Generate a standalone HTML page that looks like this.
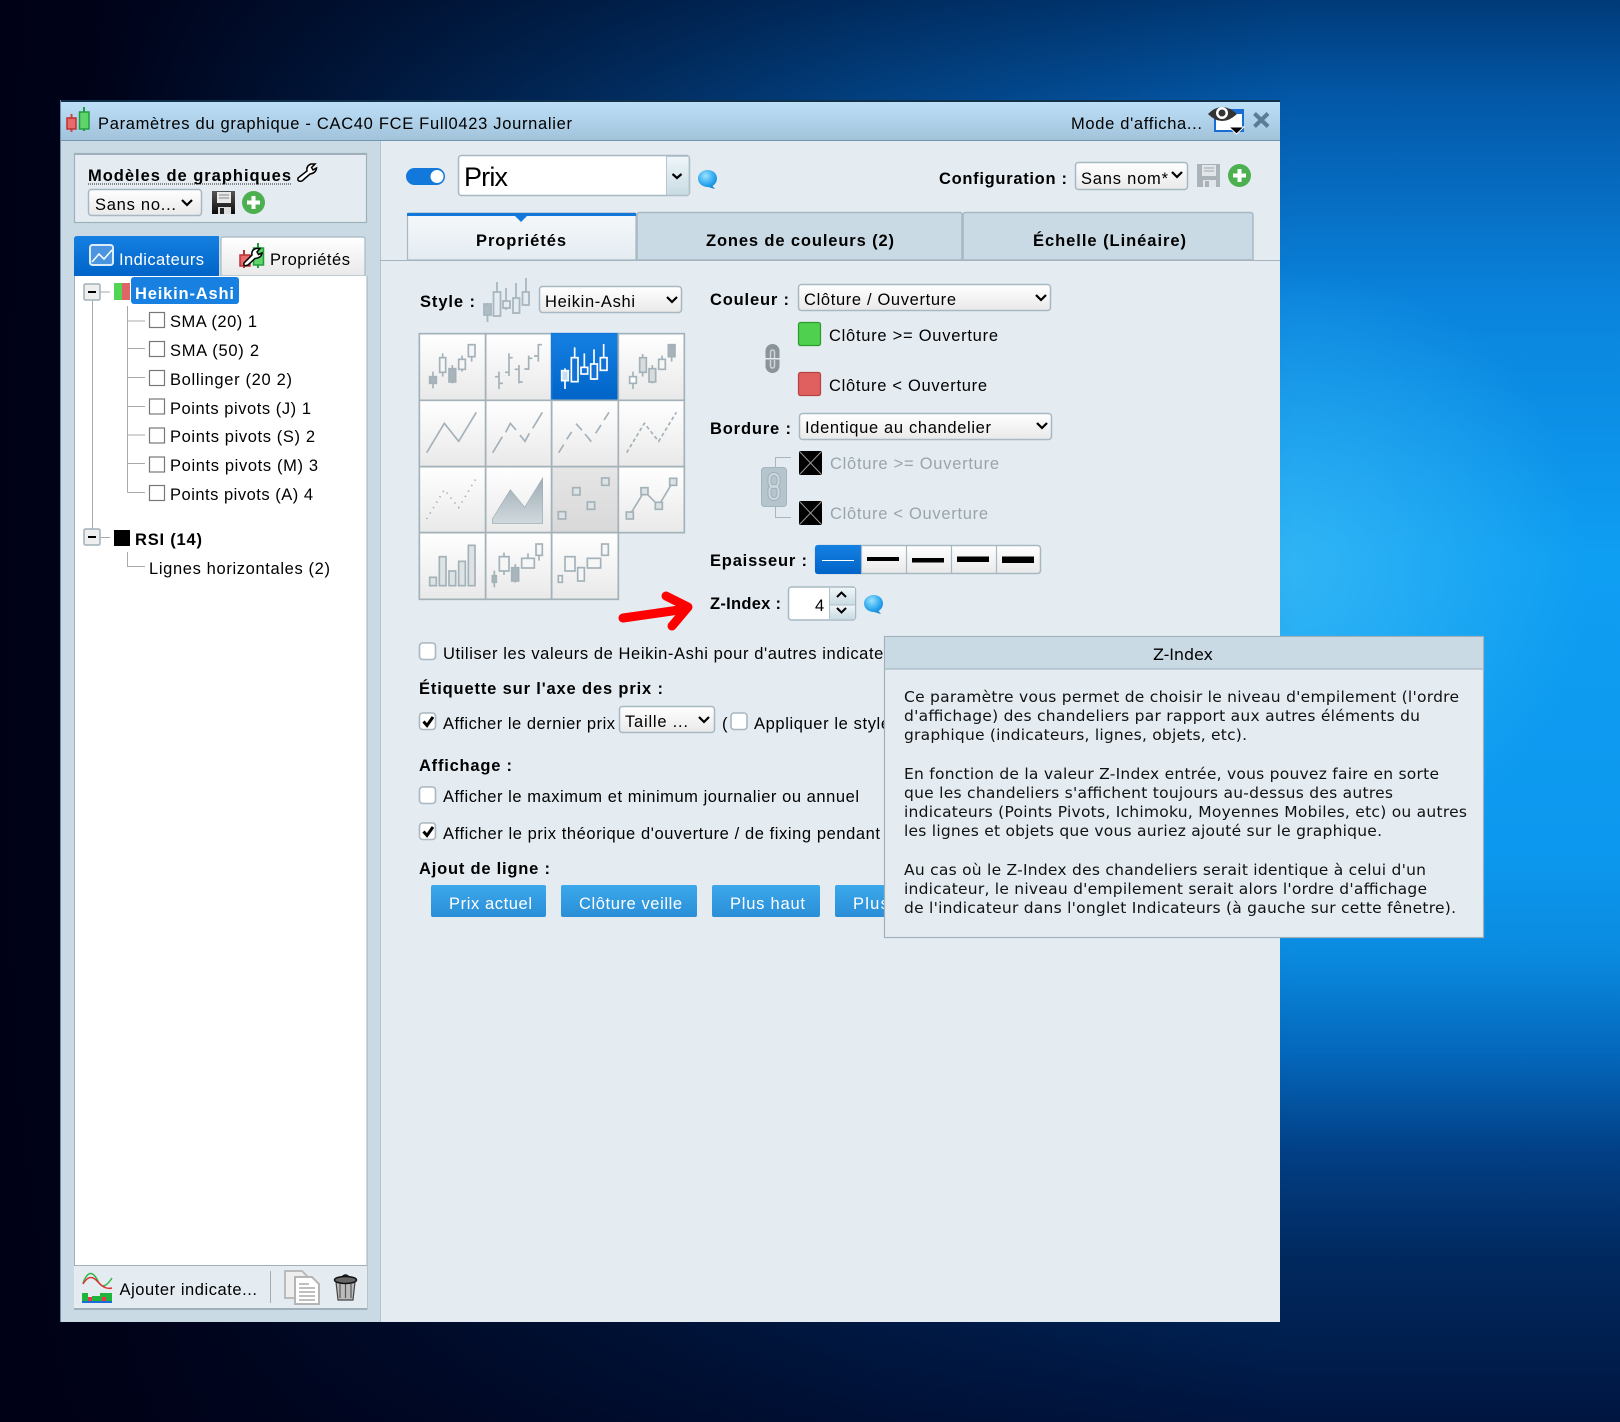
<!DOCTYPE html>
<html lang="fr"><head><meta charset="utf-8"><title>Paramètres du graphique</title>
<style>
html,body{margin:0;padding:0;width:1620px;height:1422px;overflow:hidden;background:#000118}
svg{display:block}
text{font-family:"Liberation Sans",sans-serif;font-size:16.5px;fill:#000}
.b{font-weight:bold}
.w{fill:#fff}
.d{fill:#9aa5ab}
.tt{font-family:"DejaVu Sans",sans-serif;font-size:15.5px;fill:#111}
.g path,.g rect,.g polyline,.g line{stroke:#a3b1b9;stroke-width:5;fill:none}
</style></head><body>
<svg xmlns="http://www.w3.org/2000/svg" width="1620" height="1422" viewBox="0 0 1620 1422">
<defs>
<linearGradient id="bv" x1="0" y1="0" x2="0" y2="1">
<stop offset="0" stop-color="#003a78"/><stop offset=".07" stop-color="#0358a8"/><stop offset=".21" stop-color="#0a83dc"/><stop offset=".39" stop-color="#0e9ef2"/><stop offset=".6" stop-color="#0c98ee"/><stop offset=".67" stop-color="#0a8be0"/><stop offset=".74" stop-color="#0468bc"/><stop offset=".81" stop-color="#023f86"/><stop offset=".88" stop-color="#012a60"/><stop offset="1" stop-color="#001540"/>
</linearGradient>
<linearGradient id="bh" x1="0" y1="0" x2="1" y2="0">
<stop offset="0" stop-color="#000116" stop-opacity="1"/><stop offset=".06" stop-color="#000116" stop-opacity=".98"/><stop offset=".235" stop-color="#000116" stop-opacity=".72"/><stop offset=".54" stop-color="#000116" stop-opacity=".27"/><stop offset=".8" stop-color="#000116" stop-opacity="0"/>
</linearGradient>
<radialGradient id="gl" gradientUnits="userSpaceOnUse" cx="1290" cy="570" r="300"><stop offset="0" stop-color="#3cbcf6" stop-opacity=".75"/><stop offset="1" stop-color="#3cbcf6" stop-opacity="0"/></radialGradient>
<linearGradient id="ti" x1="0" y1="0" x2="0" y2="1"><stop offset="0" stop-color="#bee1fa"/><stop offset="1" stop-color="#a2c3da"/></linearGradient>
<linearGradient id="bl" x1="0" y1="0" x2="0" y2="1"><stop offset="0" stop-color="#1580e2"/><stop offset="1" stop-color="#0064c8"/></linearGradient>
<linearGradient id="se" x1="0" y1="0" x2="0" y2="1"><stop offset="0" stop-color="#fff"/><stop offset="1" stop-color="#e9e9e9"/></linearGradient>
<linearGradient id="pr" x1="0" y1="0" x2="0" y2="1"><stop offset="0" stop-color="#e6e6e6"/><stop offset="1" stop-color="#d8d8d8"/></linearGradient>
<linearGradient id="lb" x1="0" y1="0" x2="0" y2="1"><stop offset="0" stop-color="#3ca8ec"/><stop offset="1" stop-color="#2a8ed6"/></linearGradient>
<linearGradient id="ta" x1="0" y1="0" x2="0" y2="1"><stop offset="0" stop-color="#f5f8fa"/><stop offset="1" stop-color="#e4ecf2"/></linearGradient>
<linearGradient id="sp" x1="0" y1="0" x2="0" y2="1"><stop offset="0" stop-color="#eff6f9"/><stop offset="1" stop-color="#c9dce3"/></linearGradient>
<linearGradient id="ar" x1="0" y1="0" x2="0" y2="1"><stop offset="0" stop-color="#9eadb5"/><stop offset="1" stop-color="#d0d9dd"/></linearGradient>
<radialGradient id="bu" cx=".4" cy=".3" r=".8"><stop offset="0" stop-color="#9ae2ff"/><stop offset=".6" stop-color="#2aa6ee"/><stop offset="1" stop-color="#1279cc"/></radialGradient>
<linearGradient id="fl" x1="0" y1="0" x2="0" y2="1"><stop offset="0" stop-color="#555"/><stop offset="1" stop-color="#0c0c0c"/></linearGradient>
</defs>

<!-- desktop background -->
<rect width="1620" height="1422" fill="url(#bv)"/>
<rect width="1620" height="1422" fill="url(#gl)"/>
<rect width="1620" height="1422" fill="url(#bh)"/>

<!-- window -->
<rect x="60" y="100" width="1220" height="1222" fill="#e4ecf2"/>
<rect x="60" y="100" width="320" height="1222" fill="#c9dae4"/>
<rect x="60" y="100" width="1220" height="40" fill="url(#ti)"/>
<rect x="60" y="100" width="1220" height="2" fill="#12304a"/>
<rect x="60" y="100" width="1" height="1222" fill="#6f8ea5"/>
<rect x="60" y="140" width="1220" height="1" fill="#7097b0"/>
<rect x="380" y="141" width="1" height="1181" fill="#b3c3cd"/>

<!-- title bar -->
<path d="M71.500 114V132" stroke="#c44" stroke-width="2" fill="none"/>
<path d="M84 107V131" stroke="#1f9e3f" stroke-width="2"/>
<rect x="67" y="118" width="9" height="11" fill="#e96a6a" stroke="#b33" stroke-width="1.500"/>
<rect x="79.500" y="112" width="9.500" height="17" fill="#5fd46a" stroke="#1f9e3f" stroke-width="1.500"/>
<text x="98" y="129" textLength="474">Paramètres du graphique - CAC40 FCE Full0423 Journalier</text>
<text x="1071" y="129" textLength="131">Mode d'afficha...</text>
<rect x="1215" y="110" width="28" height="21" fill="#fff" stroke="#1a6dd4" stroke-width="2"/>
<rect x="1215" y="110" width="28" height="4" fill="#1a6dd4"/>
<path d="M1208 114Q1222 100 1237 114Q1222 128 1208 114Z" fill="#333"/>
<circle cx="1222" cy="113" r="6" fill="#fff"/><circle cx="1222" cy="113" r="3.500" fill="#333"/>
<path d="M1229 127H1244L1236.500 134Z" fill="#000" stroke="#fff"/>
<path d="M1254.500 113.500L1268 126.500M1268 113.500L1254.500 126.500" stroke="#5a7d94" stroke-width="4" fill="none"/>

<!-- modèles -->
<rect x="74.500" y="153.500" width="292" height="69" fill="#e4ecf2" stroke="#9fb0bb" stroke-width="1.200"/>
<rect x="74" y="153" width="293" height="2" fill="#9fb0bb"/>
<text class="b" x="88" y="181" textLength="203">Modèles de graphiques</text>
<line x1="88" y1="184" x2="291" y2="184" stroke="#222" stroke-width="1" stroke-dasharray="1 1"/>
<path d="M298 178L307 171Q306 166 311 164L315 164L311.500 167.500L313 170L316.500 168Q316 173 310 174L302 181Q297 182 298 178Z" fill="#fff" stroke="#000" stroke-width="1.500"/>
<rect x="88.500" y="189.500" width="113" height="26" rx="3" fill="url(#se)" stroke="#a8b8c2" stroke-width="1.500"/>
<text x="95" y="210" textLength="81">Sans no...</text>
<path d="M182 200l5 5 5-5" stroke="#000" stroke-width="2.200" fill="none"/>
<path d="M212 191H235V214H212Z" fill="url(#fl)"/><rect x="217" y="192" width="14" height="11" fill="#e8e8e8"/><path d="M219 195h10M219 198h10" stroke="#888" stroke-width="1"/><rect x="218" y="207" width="13" height="7" fill="#ddd"/><rect x="220" y="208" width="4" height="6" fill="#222"/>
<circle cx="253.500" cy="202.500" r="11.500" fill="#4caf50"/><path d="M253.500 196v13M247 202.500h13" stroke="#fff" stroke-width="4"/>

<!-- left tabs -->
<path d="M74 276V239Q74 236 77 236H219V276Z" fill="url(#bl)"/>
<path d="M221 276V239Q221 237 224 237H362Q365 237 365 239V276Z" fill="url(#se)" stroke="#a8b8c2" stroke-width="1.200"/>
<rect x="90" y="245" width="23" height="20" rx="2.500" fill="#4a94e0" stroke="#dcecfb" stroke-width="2"/>
<path d="M92 262L99 254L104 259L112 250" stroke="#fff" stroke-width="1.500" fill="none"/>
<text class="w" x="119" y="265" textLength="85">Indicateurs</text>
<path d="M244 250V268" stroke="#b33" stroke-width="2"/><rect x="240" y="255" width="10" height="11" fill="#e96a6a" stroke="#b33" stroke-width="1.500"/>
<path d="M258 243V268" stroke="#1f9e3f" stroke-width="2"/><rect x="253.500" y="248" width="10" height="17" fill="#5fd46a" stroke="#1f9e3f" stroke-width="1.500"/>
<path d="M244 263L252 255Q251 250 256 248.500L260 248.500L257 252L258.500 254.500L262 253Q261.500 258 255 258.500L248 265Q243 267 244 263Z" fill="#fff" stroke="#000" stroke-width="1.500"/>
<text x="270" y="265" textLength="80">Propriétés</text>

<!-- tree -->
<rect x="74" y="276" width="293" height="989" fill="#fff"/>
<rect x="74" y="276" width="1" height="1034" fill="#9fb0bb"/>
<rect x="366.500" y="276" width="1" height="1034" fill="#9fb0bb"/>
<path d="M92.500 300V530M100 292H110M127.500 306V492.500M127.500 321H145M127.500 348.500H145M127.500 377.500H145M127.500 406.500H145M127.500 435H145M127.500 463.500H145M127.500 492.500H145M100 537.500H110M127.500 552V566.500H145" stroke="#aaa" stroke-width="1" fill="none"/>
<rect x="84" y="284" width="16" height="16" rx="1.500" fill="#eee" stroke="#9fb0bb" stroke-width="1.500"/><rect x="88" y="291" width="8" height="2" fill="#000"/>
<rect x="114" y="283" width="8" height="17" fill="#52d552"/><rect x="122" y="283" width="8" height="17" fill="#e06666"/>
<rect x="131" y="277" width="108" height="27" rx="3" fill="#1880e0"/>
<text class="b w" x="135" y="299" textLength="99">Heikin-Ashi</text>
<g fill="#fff" stroke="#777" stroke-width="1.200">
<rect x="149.500" y="312.500" width="15" height="15"/><rect x="149.500" y="341.500" width="15" height="15"/><rect x="149.500" y="370.500" width="15" height="15"/><rect x="149.500" y="399" width="15" height="15"/><rect x="149.500" y="428" width="15" height="15"/><rect x="149.500" y="457" width="15" height="15"/><rect x="149.500" y="485.500" width="15" height="15"/>
</g>
<text x="170" y="327" textLength="87">SMA (20) 1</text>
<text x="170" y="356" textLength="89">SMA (50) 2</text>
<text x="170" y="385" textLength="122">Bollinger (20 2)</text>
<text x="170" y="414" textLength="141">Points pivots (J) 1</text>
<text x="170" y="442" textLength="145">Points pivots (S) 2</text>
<text x="170" y="471" textLength="148">Points pivots (M) 3</text>
<text x="170" y="500" textLength="143">Points pivots (A) 4</text>
<rect x="84" y="529" width="16" height="16" rx="1.500" fill="#eee" stroke="#9fb0bb" stroke-width="1.500"/><rect x="88" y="536" width="8" height="2" fill="#000"/>
<rect x="114" y="530" width="16" height="16" fill="#000"/>
<text class="b" x="135" y="545" textLength="67">RSI (14)</text>
<text x="149" y="574" textLength="181">Lignes horizontales (2)</text>

<!-- tree footer -->
<rect x="74" y="1265" width="293" height="44" fill="#e4ecf2"/>
<rect x="74" y="1265" width="293" height="1" fill="#9fb0bb"/>
<rect x="74" y="1308" width="293" height="2" fill="#9fb0bb"/>
<path d="M82 1301V1293H88V1297H92V1296H100V1293H112V1301Z" fill="#1fb53a"/>
<rect x="88" y="1297" width="4" height="4" fill="#e35"/><rect x="102" y="1297" width="4" height="4" fill="#e35"/><rect x="82" y="1301" width="30" height="2" fill="#1a6dd4"/>
<path d="M83 1283Q90 1265 98 1281Q103 1292 112 1278" stroke="#2eb84a" stroke-width="1.500" fill="none"/>
<path d="M83 1284Q90 1272 98 1282Q105 1290 112 1288" stroke="#d33" stroke-width="1.500" fill="none"/>
<rect x="270" y="1271" width="1" height="32" fill="#9fb0bb"/>
<text x="119.500" y="1295" textLength="137.500">Ajouter indicate...</text>
<path d="M285 1271H302L308 1277V1298H285Z" fill="#eee" stroke="#bbb" stroke-width="2"/>
<path d="M295 1277H312L319 1284V1304H295Z" fill="#fff" stroke="#b5b5b5" stroke-width="2"/>
<path d="M299 1284H309M299 1288H315M299 1292H315M299 1296H315M299 1300H315" stroke="#aaa" stroke-width="1.500"/>
<g transform="translate(-1 0)">
<path d="M337 1282H356L354 1300H339Z" fill="#bbb" stroke="#444" stroke-width="1.200"/>
<path d="M341 1284V1298M346.500 1284V1298M352 1284V1298" stroke="#555" stroke-width="1.200"/>
<ellipse cx="346.500" cy="1280" rx="11" ry="3.500" fill="#666" stroke="#111" stroke-width="1.500"/>
<path d="M343 1277Q346.500 1273 350 1277" stroke="#111" stroke-width="1.500" fill="none"/>
</g>

<!-- top row main -->
<rect x="406" y="168" width="39" height="17" rx="8.500" fill="#1278dc"/><circle cx="437" cy="176.500" r="6.500" fill="#fff"/>
<rect x="458.500" y="155.500" width="231" height="40" rx="3" fill="#fff" stroke="#a8b8c2" stroke-width="1.500"/>
<path d="M666.500 156.500H688Q689 156.500 689 158V193Q689 195 688 195H666.500Z" fill="url(#sp)" stroke="#b8c8d0"/>
<path d="M672.500 174l4.500 4 4.500-4" stroke="#000" stroke-width="2.200" fill="none"/>
<text x="464" y="186" textLength="44" style="font-size:27px">Prix</text>
<path d="M698 178.500C698 173 703 170 707.500 170C713 170 717 173.500 717 178.500C717 182 714.500 185 712.500 186L715 189L708 187C702 187 698 183 698 178.500Z" fill="url(#bu)"/>
<text class="b" x="939" y="184" textLength="128">Configuration :</text>
<rect x="1075.500" y="162.500" width="112" height="27" rx="3" fill="url(#se)" stroke="#a8b8c2" stroke-width="1.500"/>
<text x="1081" y="184" textLength="87">Sans nom*</text>
<path d="M1172 172l5 5 5-5" stroke="#000" stroke-width="2.200" fill="none"/>
<path d="M1197 164H1220V187H1197Z" fill="#a9b3b8"/><rect x="1202" y="165" width="14" height="11" fill="#e0e6e9"/><path d="M1204 168h10M1204 171h10" stroke="#a0a8ac" stroke-width="1"/><rect x="1203" y="180" width="13" height="7" fill="#e0e6e9"/><rect x="1205" y="181" width="4" height="6" fill="#a9b3b8"/>
<circle cx="1239.500" cy="175.500" r="11.500" fill="#4caf50"/><path d="M1239.500 169v13M1233 175.500h13" stroke="#fff" stroke-width="4"/>

<!-- main tabs -->
<path d="M637 260V215Q637 212.500 640 212.500H960Q962 212.500 962 215V260Z" fill="#c9dae4" stroke="#a8b8c2" stroke-width="1.500"/>
<path d="M963 260V215Q963 212.500 966 212.500H1250Q1253 212.500 1253 215V260Z" fill="#c9dae4" stroke="#a8b8c2" stroke-width="1.500"/>
<path d="M407.500 260V215Q407.500 213 410 213H634Q636 213 636 215V260Z" fill="url(#ta)" stroke="#a8b8c2" stroke-width="1.200"/>
<rect x="407" y="213" width="229" height="3" fill="#1278dc"/>
<path d="M512 213H530L521 222Z" fill="#1278dc"/>
<rect x="380" y="260" width="900" height="1" fill="#a4b3bd"/>
<text class="b" x="476" y="246" textLength="90">Propriétés</text>
<text class="b" x="706" y="246" textLength="188">Zones de couleurs (2)</text>
<text class="b" x="1033" y="246" textLength="153">Échelle (Linéaire)</text>

<!-- style -->
<text class="b" x="420" y="307" textLength="55">Style :</text>
<g stroke="#a8b6bf" stroke-width="1.800" fill="none">
<path d="M487.500 303V322M497 282V316M506 288V310M516 283V314M526 278V305"/>
<rect x="484" y="304" width="7" height="11" fill="#b0bcc3"/>
<rect x="493.500" y="292" width="7" height="24" fill="#e4ecf2"/>
<rect x="503" y="301" width="7" height="7" fill="#e4ecf2"/>
<rect x="513" y="298" width="6.500" height="15" fill="#e4ecf2"/>
<rect x="522.500" y="292" width="6.500" height="13" fill="#e4ecf2"/>
</g>
<rect x="539.500" y="286.500" width="142" height="26" rx="3" fill="url(#se)" stroke="#a8b8c2" stroke-width="1.500"/>
<text x="545" y="307" textLength="90">Heikin-Ashi</text>
<path d="M667 297l5 5 5-5" stroke="#000" stroke-width="2.200" fill="none"/>

<!-- style grid -->
<g class="g" transform="translate(410 320) scale(.33333)">
<rect x="28" y="41" width="199" height="200" style="fill:url(#se)"/><rect x="227" y="41" width="198" height="200" style="fill:url(#se)"/><rect x="425" y="41" width="200" height="200" style="fill:url(#bl);stroke:#1278dc"/><rect x="625" y="41" width="198" height="200" style="fill:url(#se)"/>
<rect x="28" y="241" width="199" height="199" style="fill:url(#se)"/><rect x="227" y="241" width="198" height="199" style="fill:url(#se)"/><rect x="425" y="241" width="200" height="199" style="fill:url(#se)"/><rect x="625" y="241" width="198" height="199" style="fill:url(#se)"/>
<rect x="28" y="440" width="199" height="198" style="fill:url(#se)"/><rect x="227" y="440" width="198" height="198" style="fill:url(#se)"/><rect x="425" y="440" width="200" height="198" style="fill:url(#pr)"/><rect x="625" y="440" width="198" height="198" style="fill:url(#se)"/>
<rect x="28" y="638" width="199" height="200" style="fill:url(#se)"/><rect x="227" y="638" width="198" height="200" style="fill:url(#se)"/><rect x="425" y="638" width="200" height="200" style="fill:url(#se)"/>
<!-- r0c0 -->
<path d="M69 155V205M98 100V170M127 135V190M156 107V155M185 72V125"/>
<rect x="59" y="170" width="20" height="20" style="fill:#aab5bb"/><rect x="89" y="113" width="18" height="44" style="fill:#f6f6f6"/><rect x="117" y="146" width="20" height="40" style="fill:#aab5bb"/><rect x="146" y="118" width="20" height="30" style="fill:#f6f6f6"/><rect x="175" y="74" width="20" height="36" style="fill:#f6f6f6"/>
<!-- r0c1 -->
<path d="M267 155V207M255 170H267M267 190H279M297 100V168M285 157H297M297 113H308M327 135V190M314 148H327M327 186H338M356 107V150M343 147H356M356 115H367M385 72V125M372 108H385M385 74H396"/>
<!-- r0c2 -->
<path d="M465 145V207M494 82V187M523 100V162M552 88V180M581 72V152" style="stroke:#fff"/>
<rect x="455" y="152" width="20" height="30" style="fill:#c5def5;stroke:#fff"/><rect x="484" y="113" width="20" height="72" style="fill:#1272d6;stroke:#fff"/><rect x="513" y="142" width="20" height="20" style="fill:#1272d6;stroke:#fff"/><rect x="542" y="132" width="20" height="45" style="fill:#1272d6;stroke:#fff"/><rect x="571" y="113" width="20" height="38" style="fill:#1272d6;stroke:#fff"/>
<!-- r0c3 -->
<path d="M669 155V207M698 102V170M727 135V190M756 107V150M785 72V125"/>
<rect x="659" y="170" width="20" height="20" style="fill:#fff"/><rect x="689" y="113" width="20" height="44" style="fill:#d8dcdd"/><rect x="717" y="146" width="20" height="40" style="fill:#d8dcdd"/><rect x="746" y="118" width="20" height="30" style="fill:#f6f6f6"/><rect x="775" y="74" width="20" height="36" style="fill:#a8b3b9"/>
<!-- r1 -->
<polyline points="50,398 103,310 146,364 199,277"/>
<path d="M248 398L277 350M287 337L301 310L318 330M330 345L345 364L358 340M368 325L397 277"/>
<path d="M446 398L461 374M470 358L485 336M498 311L516 331M525 342L544 365M557 340L573 315M582 300L597 277"/>
<polyline points="650,398 703,310 746,364 799,277" style="stroke-dasharray:11 8"/>
<!-- r2 -->
<polyline points="50,597 103,509 146,563 199,474" style="stroke-dasharray:4 15"/>
<path d="M247 597L301 509L344 562L398 474V611H247Z" style="fill:url(#ar);stroke:#9eadb5;stroke-width:2"/>
<rect x="445" y="575" width="22" height="22" style="fill:#dde2e5"/><rect x="488" y="503" width="22" height="22" style="fill:#dde2e5"/><rect x="532" y="546" width="22" height="22" style="fill:#dde2e5"/><rect x="575" y="474" width="22" height="22" style="fill:#dde2e5"/>
<polyline points="659,586 703,514 746,557 789,485"/>
<rect x="649" y="576" width="21" height="21" style="fill:#dde2e5"/><rect x="693" y="503" width="21" height="21" style="fill:#dde2e5"/><rect x="736" y="547" width="21" height="21" style="fill:#dde2e5"/><rect x="779" y="475" width="21" height="21" style="fill:#dde2e5"/>
<!-- r3 -->
<rect x="59" y="772" width="20" height="25" style="fill:#dde2e5"/><rect x="88" y="710" width="20" height="87" style="fill:#dde2e5"/><rect x="117" y="753" width="20" height="44" style="fill:#dde2e5"/><rect x="146" y="724" width="20" height="73" style="fill:#dde2e5"/><rect x="175" y="676" width="20" height="121" style="fill:#dde2e5"/>
<path d="M253 752V802M282 698V765M316 732V788M354 700V746M387 672V722"/>
<rect x="247" y="767" width="12" height="20" style="fill:#aab5bb"/><rect x="268" y="710" width="29" height="43" style="fill:#f6f6f6"/><rect x="305" y="743" width="21" height="40" style="fill:#aab5bb"/><rect x="335" y="715" width="38" height="29" style="fill:#f6f6f6"/><rect x="378" y="672" width="19" height="34" style="fill:#f6f6f6"/>
<rect x="445" y="767" width="12" height="20" style="fill:#f6f6f6"/><rect x="465" y="710" width="30" height="43" style="fill:#f6f6f6"/><rect x="503" y="743" width="20" height="40" style="fill:#f6f6f6"/><rect x="532" y="715" width="40" height="29" style="fill:#f6f6f6"/><rect x="575" y="672" width="20" height="34" style="fill:#f6f6f6"/>
</g>

<!-- couleur -->
<text class="b" x="710" y="305" textLength="79">Couleur :</text>
<rect x="798.500" y="284.500" width="252" height="26" rx="3" fill="url(#se)" stroke="#a8b8c2" stroke-width="1.500"/>
<text x="804" y="305" textLength="152">Clôture / Ouverture</text>
<path d="M1036 295l5 5 5-5" stroke="#000" stroke-width="2.200" fill="none"/>
<rect x="798.500" y="322.500" width="22" height="23" rx="2" fill="#4fd14f" stroke="#2a9a2a" stroke-width="1.200"/>
<text x="829" y="341" textLength="169">Clôture &gt;= Ouverture</text>
<rect x="798.500" y="372.500" width="22" height="23" rx="2" fill="#e06060" stroke="#b84040" stroke-width="1.200"/>
<text x="829" y="391" textLength="158">Clôture &lt; Ouverture</text>
<path d="M765.500 358V351a7 7 0 0 1 14 0V358Z" fill="#8a9499"/>
<path d="M765.500 359.500V366a7 7 0 0 0 14 0V359.500Z" fill="#8a9499"/>
<path d="M770.500 358V352a2 2 0 0 1 4 0V358M770.500 360V366a2 2 0 0 0 4 0V360" stroke="#cdd5da" stroke-width="1.500" fill="none"/>

<!-- bordure -->
<text class="b" x="710" y="434" textLength="81">Bordure :</text>
<rect x="799.500" y="413.500" width="252" height="26" rx="3" fill="url(#se)" stroke="#a8b8c2" stroke-width="1.500"/>
<text x="805" y="433" textLength="186">Identique au chandelier</text>
<path d="M1037 423l5 5 5-5" stroke="#000" stroke-width="2.200" fill="none"/>
<path d="M775.500 467V457.500H791M775.500 507V517.500H791" stroke="#a8b6bf" fill="none"/>
<rect x="761.500" y="467.500" width="25" height="39" rx="3" fill="#b5c4cd" stroke="#a4b4be"/>
<rect x="769.500" y="474" width="9" height="13" rx="4.500" fill="none" stroke="#9fb0ba" stroke-width="4"/>
<rect x="769.500" y="486" width="9" height="13" rx="4.500" fill="none" stroke="#9fb0ba" stroke-width="4"/>
<rect x="769.500" y="474" width="9" height="13" rx="4.500" fill="none" stroke="#cdd8de" stroke-width="2"/>
<rect x="769.500" y="486" width="9" height="13" rx="4.500" fill="none" stroke="#cdd8de" stroke-width="2"/>
<rect x="799" y="451" width="23" height="24" rx="2" fill="#000"/><path d="M800 452L821 474M821 452L800 474" stroke="#999" stroke-width="1"/>
<rect x="799" y="501" width="23" height="24" rx="2" fill="#000"/><path d="M800 502L821 524M821 502L800 524" stroke="#999" stroke-width="1"/>
<text class="d" x="830" y="469" textLength="169">Clôture &gt;= Ouverture</text>
<text class="d" x="830" y="519" textLength="158">Clôture &lt; Ouverture</text>

<!-- epaisseur -->
<text class="b" x="710" y="566" textLength="97">Epaisseur :</text>
<rect x="815.500" y="545.500" width="225" height="28" rx="3" fill="url(#se)" stroke="#a8b8c2" stroke-width="1.500"/>
<path d="M815 548Q815 545 818 545H861V574H818Q815 574 815 571Z" fill="url(#bl)"/>
<path d="M906.500 546V573M951.500 546V573M996.500 546V573M861.500 546V573" stroke="#a8b8c2" stroke-width="1.200"/>
<rect x="822" y="560" width="32" height="1" fill="#fff"/>
<rect x="867" y="557" width="32" height="4" fill="#000"/>
<rect x="912" y="558" width="32" height="4.500" fill="#000"/>
<rect x="957" y="556.500" width="32" height="5.500" fill="#000"/>
<rect x="1002" y="556.500" width="32" height="6.500" fill="#000"/>

<!-- z-index -->
<text class="b" x="710" y="609" textLength="71">Z-Index :</text>
<rect x="788.500" y="587" width="67" height="33" rx="3" fill="#fff" stroke="#a8b8c2" stroke-width="1.500"/>
<rect x="829" y="588" width="26" height="17" fill="url(#sp)"/><rect x="829" y="605" width="26" height="14" fill="url(#sp)"/>
<path d="M829.500 588V619M829.500 605H855" stroke="#b0c0c8"/>
<path d="M837 597l4.500-4.500 4.500 4.500M837 608l4.500 4.500 4.500-4.500" stroke="#000" stroke-width="2" fill="none"/>
<text x="815" y="611" style="font-size:16.500px">4</text>
<path d="M864 603.500C864 598 869 595 873.500 595C879 595 883 598.500 883 603.500C883 607 880.500 610 878.500 611L881 614L874 612C868 612 864 608 864 603.500Z" fill="url(#bu)"/>

<!-- red arrow -->
<path d="M623 618L686 609" stroke="#f00" stroke-width="9" stroke-linecap="round" fill="none"/>
<path d="M666 596L688 607L672 626" stroke="#f00" stroke-width="9" stroke-linecap="round" stroke-linejoin="round" fill="none"/>

<!-- options -->
<g fill="#fff" stroke="#aab7c0" stroke-width="1.600">
<rect x="419.500" y="643" width="16" height="16.500" rx="3"/>
<rect x="419.500" y="713" width="16" height="16.500" rx="3"/>
<rect x="731" y="713" width="16" height="16.500" rx="3"/>
<rect x="419.500" y="787" width="16" height="16.500" rx="3"/>
<rect x="419.500" y="823" width="16" height="16.500" rx="3"/>
</g>
<path d="M423.500 721.500l3.500 4 6-8.500M423.500 831.500l3.500 4 6-8.500" stroke="#000" stroke-width="3" fill="none"/>
<text x="443" y="659" textLength="465">Utiliser les valeurs de Heikin-Ashi pour d'autres indicateurs</text>
<text class="b" x="419" y="694" textLength="244">Étiquette sur l'axe des prix :</text>
<text x="443" y="729" textLength="172">Afficher le dernier prix</text>
<rect x="619.500" y="706.500" width="95" height="26" rx="3" fill="url(#se)" stroke="#a8b8c2" stroke-width="1.500"/>
<text x="625" y="727" textLength="63">Taille ...</text>
<path d="M699 717l5 5 5-5" stroke="#000" stroke-width="2.200" fill="none"/>
<text x="722" y="729">(</text>
<text x="754" y="729" textLength="136">Appliquer le style</text>
<text class="b" x="419" y="771" textLength="93">Affichage :</text>
<text x="443" y="802" textLength="416">Afficher le maximum et minimum journalier ou annuel</text>
<text x="443" y="839" textLength="437">Afficher le prix théorique d'ouverture / de fixing pendant</text>
<text class="b" x="419" y="874" textLength="131">Ajout de ligne :</text>
<rect x="431" y="885" width="115" height="32" rx="2" fill="url(#lb)"/>
<rect x="561" y="885" width="136" height="32" rx="2" fill="url(#lb)"/>
<rect x="712" y="885" width="108" height="32" rx="2" fill="url(#lb)"/>
<rect x="835" y="885" width="108" height="32" rx="2" fill="url(#lb)"/>
<text class="w" x="449" y="909" textLength="83">Prix actuel</text>
<text class="w" x="579" y="909" textLength="103">Clôture veille</text>
<text class="w" x="730" y="909" textLength="75">Plus haut</text>
<text class="w" x="853" y="909" textLength="72">Plus bas</text>

<!-- tooltip -->
<rect x="884.500" y="636.500" width="599" height="301" fill="#e4ecf2" stroke="#9fb0bb" stroke-width="1.200"/>
<rect x="885" y="637" width="598" height="31.500" fill="#c9dae4"/>
<rect x="885" y="668.500" width="598" height="1" fill="#9fb0bb"/>
<text class="tt" x="1153" y="660" textLength="60" style="font-size:16px;fill:#000">Z-Index</text>
<text class="tt" x="904" y="702" textLength="555">Ce paramètre vous permet de choisir le niveau d'empilement (l'ordre</text>
<text class="tt" x="904" y="721" textLength="516">d'affichage) des chandeliers par rapport aux autres éléments du</text>
<text class="tt" x="904" y="740" textLength="343">graphique (indicateurs, lignes, objets, etc).</text>
<text class="tt" x="904" y="779" textLength="535">En fonction de la valeur Z-Index entrée, vous pouvez faire en sorte</text>
<text class="tt" x="904" y="798" textLength="489">que les chandeliers s'affichent toujours au-dessus des autres</text>
<text class="tt" x="904" y="817" textLength="563">indicateurs (Points Pivots, Ichimoku, Moyennes Mobiles, etc) ou autres</text>
<text class="tt" x="904" y="836" textLength="478">les lignes et objets que vous auriez ajouté sur le graphique.</text>
<text class="tt" x="904" y="875" textLength="522">Au cas où le Z-Index des chandeliers serait identique à celui d'un</text>
<text class="tt" x="904" y="894" textLength="523">indicateur, le niveau d'empilement serait alors l'ordre d'affichage</text>
<text class="tt" x="904" y="913" textLength="552">de l'indicateur dans l'onglet Indicateurs (à gauche sur cette fênetre).</text>
</svg>
</body></html>
